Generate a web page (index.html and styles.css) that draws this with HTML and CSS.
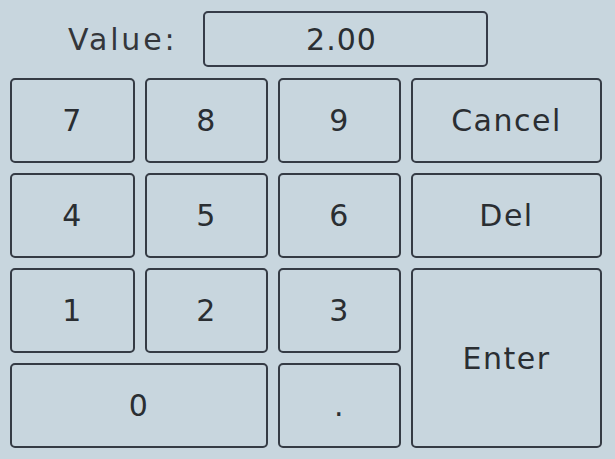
FILE: index.html
```html
<!DOCTYPE html>
<html>
<head>
<meta charset="utf-8">
<link rel="stylesheet" href="styles.css">
</head>
<body>
<div class="screen">
  <div class="top">
    <span class="label">Value:</span>
    <div class="value">2.00</div>
  </div>
  <div class="pad">
    <div class="key">7</div>
    <div class="key">8</div>
    <div class="key">9</div>
    <div class="key">Cancel</div>
    <div class="key">4</div>
    <div class="key">5</div>
    <div class="key">6</div>
    <div class="key">Del</div>
    <div class="key">1</div>
    <div class="key">2</div>
    <div class="key">3</div>
    <div class="key enter">Enter</div>
    <div class="key zero">0</div>
    <div class="key">.</div>
  </div>
</div>
</body>
</html>
```
FILE: styles.css
```css
html, body {
  margin: 0;
  padding: 0;
  background: #c8d6de;
}
.screen {
  width: 615px;
  height: 459px;
  box-sizing: border-box;
  padding: 11px 0 0 10px;
  font-family: "DejaVu Sans", sans-serif;
  color: #2a2e32;
}
.top {
  display: flex;
  align-items: center;
  height: 56px;
}
.label {
  margin-left: 58px;
  width: 135px;
  font-size: 30px;
  letter-spacing: 2.8px;
  color: #34363a;
}
.value {
  width: 285px;
  height: 56px;
  box-sizing: border-box;
  padding-right: 8px;
  border: 2px solid #363c48;
  border-radius: 5px;
  display: flex;
  align-items: center;
  justify-content: center;
  font-size: 30px;
  letter-spacing: 1px;
}
.pad {
  margin-top: 11px;
  display: grid;
  grid-template-columns: 125px 123px 123px 191px;
  grid-template-rows: 85px 85px 85px 85px;
  column-gap: 10px;
  row-gap: 10px;
}
.key {
  box-sizing: border-box;
  border: 2px solid #353b44;
  border-radius: 5px;
  display: flex;
  align-items: center;
  justify-content: center;
  font-size: 30px;
  letter-spacing: 1.5px;
}
.enter {
  grid-column: 4;
  grid-row: 3 / span 2;
}
.zero {
  grid-column: 1 / span 2;
}
```
